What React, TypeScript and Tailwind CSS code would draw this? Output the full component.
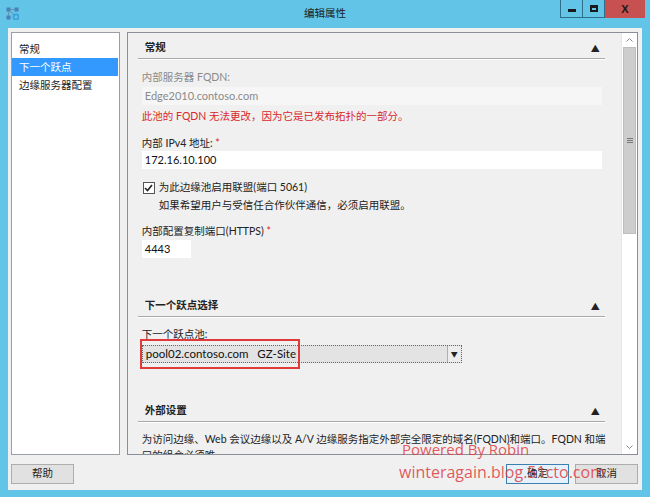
import React from 'react';

const font = "font-['Lato','Noto_Sans_CJK_SC',sans-serif]";

function SectionHeader({ title }: { title: string }) {
  return (
    <div className="h-[21px] flex items-center justify-between pl-[7px] pr-[5px] border-b border-[#a9a9a9] shadow-[0_1px_0_#ffffff]">
      <span className="text-[10.5px] font-bold text-[#222]">{title}</span>
      <span className="text-[9px] text-[#222] leading-none">▲</span>
    </div>
  );
}

export default function App() {
  return (
    <div className={`w-[650px] h-[497px] bg-[#62c4e6] flex flex-col ${font} text-[10.5px] text-[#333]`}>
      {/* Title bar */}
      <div className="h-[28px] flex shrink-0">
        <div className="w-[90px] pl-[6px] pt-[7px]">
          <svg width="13" height="13" viewBox="0 0 13 13">
            <rect x="0.5" y="0.5" width="4" height="4" fill="#4a7fb8" />
            <rect x="8.5" y="0.5" width="4" height="4" fill="#4a7fb8" />
            <rect x="0.5" y="8.5" width="4" height="4" fill="#4a7fb8" />
            <circle cx="10" cy="10" r="2.6" fill="none" stroke="#3aa0d8" strokeWidth="1.6" />
            <path d="M2.5 4.5 L2.5 8.5 M4.5 2.5 L8.5 2.5 M4 4 L8 8" stroke="#6a8fb0" strokeWidth="1" />
          </svg>
        </div>
        <div className="flex-1 text-center pt-[6px] text-[10.5px] text-[#1a1a1a]">编辑属性</div>
        <div className="w-[90px] flex items-start">
          <div className="w-[23px] h-[18px] border border-[#2f6f8c] border-t-0 flex items-center justify-center">
            <div className="w-[8px] h-[3px] bg-[#1a1a1a] mt-[3px]" />
          </div>
          <div className="w-[22px] h-[18px] border border-[#2f6f8c] border-t-0 border-l-0 flex items-center justify-center">
            <div className="w-[8px] h-[7px] border-[2px] border-[#1a1a1a] border-t-[3px]" />
          </div>
          <div className="w-[40px] h-[18px] bg-[#c75050] flex items-center justify-center text-[11px] font-bold text-[#1a1a1a] font-['Liberation_Sans',sans-serif]">
            X
          </div>
        </div>
      </div>

      {/* Body */}
      <div className="mx-[8px] mb-[7px] flex-1 bg-[#f0f0f0] pt-[4px] pl-[3px] pr-[4px] flex flex-col">
        <div className="flex gap-[7px] h-[423px]">
          {/* Left nav */}
          <div className="w-[109px] bg-white border border-[#9a9ea6] pt-[7px]">
            <div className="h-[18px] leading-[18px] pl-[7px] text-[#222]">常规</div>
            <div className="h-[18px] leading-[18px] pl-[7px] mr-[1px] bg-[#3399ff] text-white">下一个跃点</div>
            <div className="h-[18px] leading-[18px] pl-[7px] text-[#222]">边缘服务器配置</div>
          </div>

          {/* Right panel */}
          <div className="w-[512px] border border-[#8a8e96] flex overflow-hidden">
            <div className="flex-1 overflow-hidden">
              <div className="ml-[10px] w-[467px] pt-[5px]">
                {/* 常规 */}
                <SectionHeader title="常规" />
                <div className="pl-[4px]">
                  <div className="mt-[10px] h-[16px] leading-[16px] text-[#8a8a8a]">内部服务器 FQDN:</div>
                  <div className="mt-[2px] w-[460px] h-[18px] bg-[#f6f6f6] pl-[3px] leading-[18px] text-[11px] text-[#8a8a8a]">
                    Edge2010.contoso.com
                  </div>
                  <div className="mt-[3px] h-[16px] leading-[16px] text-[#d8282c]">
                    此池的 FQDN 无法更改，因为它是已发布拓扑的一部分。
                  </div>
                  <div className="mt-[11px] h-[16px] leading-[16px] text-[#222]">
                    内部 IPv4 地址: <span className="text-[#d8282c]">*</span>
                  </div>
                  <div className="w-[460px] h-[18px] bg-white pl-[3px] leading-[18px] text-[11px] text-[#111]">172.16.10.100</div>
                  <div className="mt-[11px] h-[16px] flex items-center gap-[4px]">
                    <div className="w-[12px] h-[12px] border border-[#555] bg-white flex items-center justify-center ml-[1px]">
                      <svg width="9" height="8" viewBox="0 0 9 8">
                        <path d="M1 4 L3.5 6.5 L8 1" stroke="#222" strokeWidth="1.6" fill="none" />
                      </svg>
                    </div>
                    <span className="text-[#222]">为此边缘池启用联盟(端口 5061)</span>
                  </div>
                  <div className="mt-[1px] h-[16px] leading-[16px] pl-[17px] text-[#222]">
                    如果希望用户与受信任合作伙伴通信，必须启用联盟。
                  </div>
                  <div className="mt-[10px] h-[16px] leading-[16px] text-[#222]">
                    内部配置复制端口(HTTPS) <span className="text-[#d8282c]">*</span>
                  </div>
                  <div className="mt-[1px] w-[49px] h-[18px] bg-white pl-[3px] leading-[18px] text-[11px] text-[#111]">4443</div>
                </div>

                {/* 下一个跃点选择 */}
                <div className="mt-[38px]">
                  <SectionHeader title="下一个跃点选择" />
                </div>
                <div className="pl-[4px]">
                  <div className="mt-[9px] h-[16px] leading-[16px] text-[#222]">下一个跃点池:</div>
                  <div className="relative mt-[3px] w-[320px] h-[18px] border border-dotted border-[#666] bg-[#e3e3e3] flex">
                    <div className="flex-1 pl-[3px] leading-[16px] text-[11.5px] text-[#111] whitespace-pre">
                      pool02.contoso.com   GZ-Site
                    </div>
                    <div className="w-[14px] border-l border-[#b0b0b0] bg-[#ececec] flex items-center justify-center">
                      <span className="text-[7px] leading-none text-[#222]">▼</span>
                    </div>
                    <div className="absolute left-[-3px] top-[-7px] w-[160px] h-[30px] border-2 border-[#e03a3a]" />
                  </div>
                </div>

                {/* 外部设置 */}
                <div className="mt-[38px]">
                  <SectionHeader title="外部设置" />
                </div>
                <div className="pl-[4px] mt-[9px] leading-[16px] text-[#222]">
                  <div className="whitespace-nowrap">为访问边缘、Web 会议边缘以及 A/V 边缘服务指定外部完全限定的域名(FQDN)和端口。FQDN 和端</div>
                  <div>口的组合必须唯一</div>
                </div>
              </div>
            </div>

            {/* Scrollbar */}
            <div className="w-[16px] bg-white border-l border-[#e6e6e6] flex flex-col">
              <div className="h-[14px] flex items-center justify-center">
                <svg width="7" height="4" viewBox="0 0 7 4">
                  <path d="M0.5 3.5 L3.5 0.5 L6.5 3.5" stroke="#888" fill="none" />
                </svg>
              </div>
              <div className="h-[187px] mx-[1px] bg-[#cdcdcd] border border-[#bdbdbd] flex items-center justify-center">
                <div className="flex flex-col gap-[1px]">
                  <div className="w-[6px] h-[1px] bg-[#777]" />
                  <div className="w-[6px] h-[1px] bg-[#777]" />
                  <div className="w-[6px] h-[1px] bg-[#777]" />
                </div>
              </div>
              <div className="flex-1" />
              <div className="h-[14px] flex items-center justify-center">
                <svg width="7" height="4" viewBox="0 0 7 4">
                  <path d="M0.5 0.5 L3.5 3.5 L6.5 0.5" stroke="#888" fill="none" />
                </svg>
              </div>
            </div>
          </div>
        </div>

        {/* Bottom buttons */}
        <div className="relative mt-[9px] h-[20px] flex">
          <button className="w-[63px] h-[20px] bg-[#e1e1e1] border border-[#adadad] text-[10.5px] text-[#222]">帮助</button>
          <div className="flex-1" />
          <button className="w-[63px] h-[20px] bg-[#e5f1fb] border border-[#3c7fb1] text-[10.5px] text-[#222]">确定</button>
          <button className="ml-[6px] w-[63px] h-[20px] bg-[#e1e1e1] border border-[#adadad] text-[10.5px] text-[#222]">取消</button>

          {/* Watermark */}
          <div className="absolute left-[388px] top-[-25px] font-['Open_Sans',sans-serif] text-[rgba(222,60,62,0.85)] pointer-events-none">
            <div className="text-[15px] leading-[20px] pl-[3px]">Powered By Robin</div>
            <div className="text-[16px] leading-[22px] mt-[2px]">winteragain.blog.51cto.com</div>
          </div>
        </div>
      </div>
    </div>
  );
}
